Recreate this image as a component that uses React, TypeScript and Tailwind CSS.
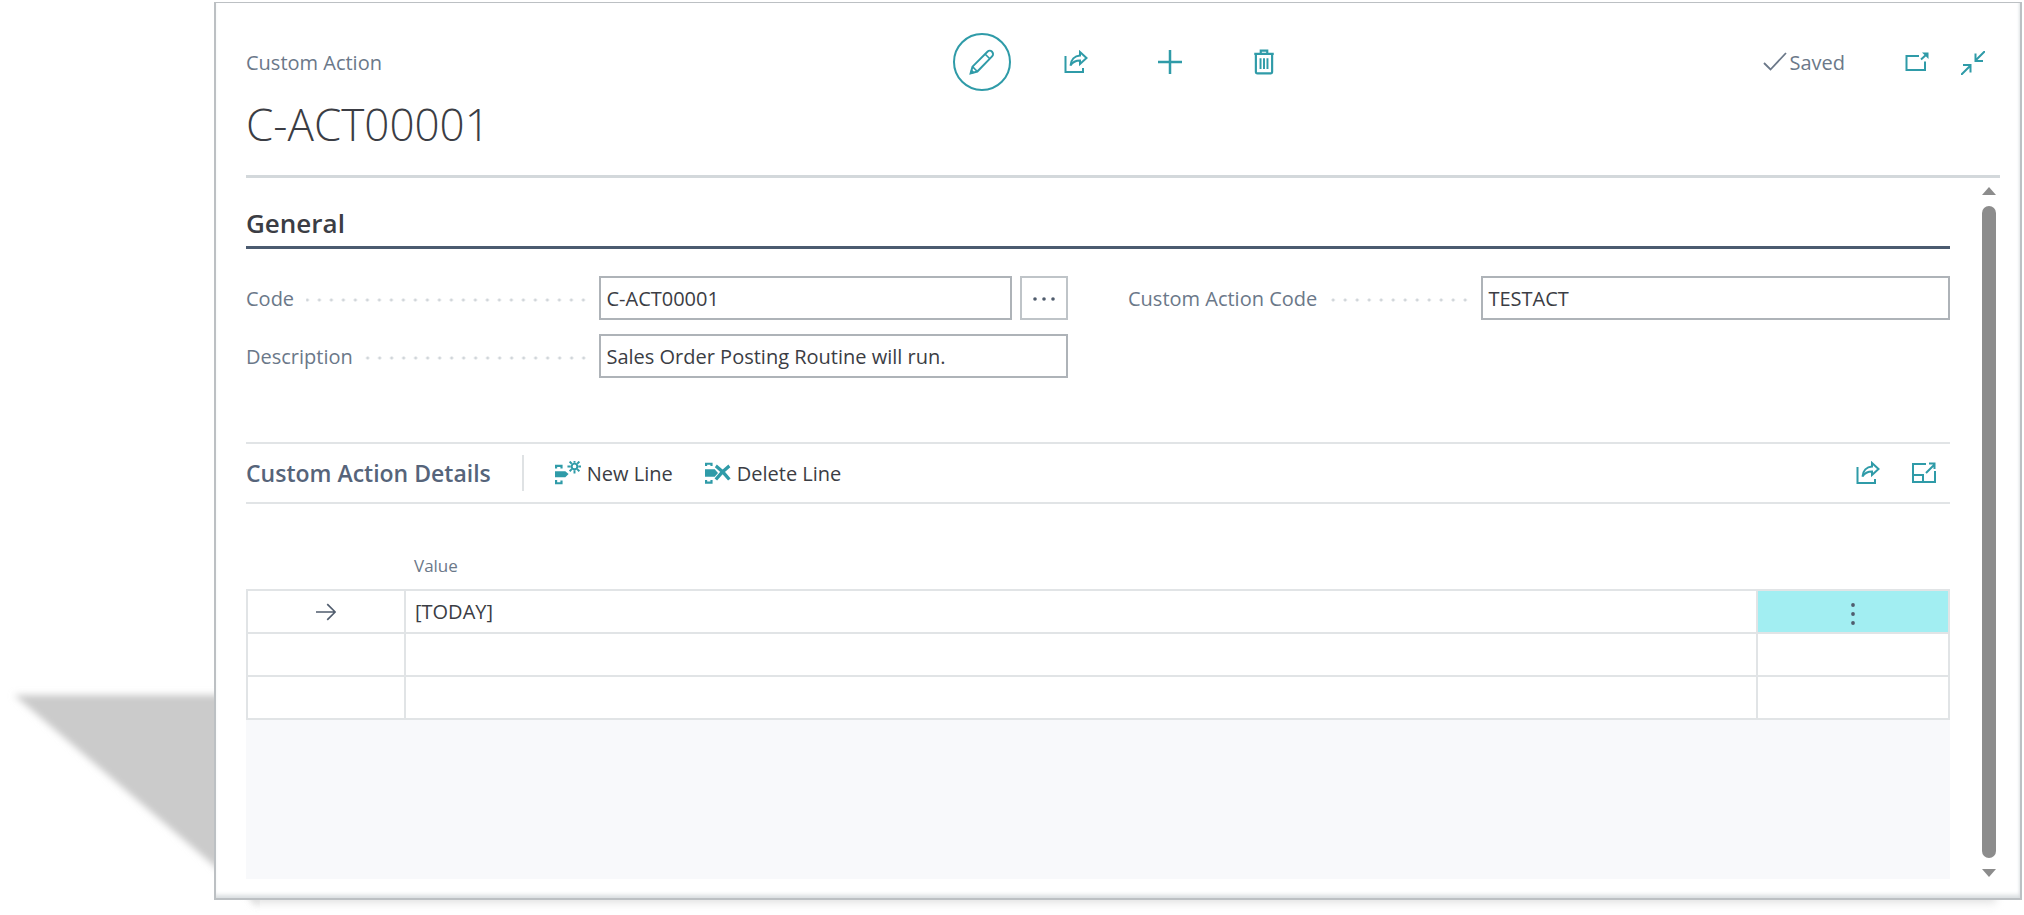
import { ReactNode } from 'react';

interface IconProps {
  className?: string;
  children: ReactNode;
}

function Icon({ className = 'size-6', children }: IconProps) {
  return (
    <svg className={`shrink-0 ${className}`} fill="none" viewBox="0 0 24 24" stroke="currentColor" strokeWidth={2} aria-hidden="true">
      {children}
    </svg>
  );
}

function ShareIcon() {
  return (
    <Icon>
      <path d="M1.500 6v16h17.500v-4" />
      <path d="M16 2l6.500 6L16 14v-3.500c-4 0-7 1-9.500 5C7 10 10.500 5.800 16 5.500z" />
    </Icon>
  );
}

interface FieldProps {
  id: string;
  label: string;
  value: string;
  lookup?: boolean;
}

function Field({ id, label, value, lookup }: FieldProps) {
  return (
    <div className="flex h-11 items-center">
      <div className="flex w-[43%] shrink-0 items-center gap-3 pt-[2px] pr-[10px]">
        <label htmlFor={id} className="whitespace-nowrap text-[#6b7889]">
          {label}
        </label>
        <span className="mt-px h-3 flex-1 bg-[radial-gradient(circle,#d0d5d9_1px,transparent_2px)] bg-[length:12px_12px] bg-right bg-repeat-x" />
      </div>
      <input
        id={id}
        defaultValue={value}
        className="h-11 min-w-0 flex-1 border-2 border-[#aeb3b8] bg-white px-[5px] pt-px text-[#3b3d44] outline-none"
      />
      {lookup && (
        <button type="button" aria-label="Look up" className="ml-2 flex h-11 w-12 items-center justify-center border-2 border-[#bfc4c8]">
          <svg className="size-6" viewBox="0 0 24 24" fill="#505c6d">
            <circle cx="3" cy="13" r="1.800" />
            <circle cx="12" cy="13" r="1.800" />
            <circle cx="21" cy="13" r="1.800" />
          </svg>
        </button>
      )}
    </div>
  );
}

function Header() {
  return (
    <header className="mr-5 border-b-[3px] border-[#d3d8db] pb-[18px]">
      <div className="grid h-[58px] grid-cols-[1fr_auto_1fr] items-center">
        <span className="pt-[2px] text-[#6b7889]">Custom Action</span>
        <div className="flex gap-9 text-[#2f9ba8]">
          <button type="button" aria-label="Edit" className="flex size-[58px] items-center justify-center rounded-full border-2">
            <Icon className="size-[26px]">
              <path d="M1.500 22.500l1.700-6.200L17 2.500a2.900 2.900 0 0 1 4.300 4.300L7.700 20.800z" strokeWidth={1.800} />
              <path d="M15 4.800l4.200 4.200M3.200 16.300l4.500 4.500" strokeWidth={1.500} />
              <path d="M1.500 22.500l.8-3 2.200 2.200z" fill="currentColor" strokeWidth={1} />
            </Icon>
          </button>
          <button type="button" aria-label="Share" className="flex size-[58px] items-center justify-center">
            <ShareIcon />
          </button>
          <button type="button" aria-label="New" className="flex size-[58px] items-center justify-center">
            <Icon>
              <path d="M12 0v24M0 12h24" strokeWidth={2.500} />
            </Icon>
          </button>
          <button type="button" aria-label="Delete" className="flex size-[58px] items-center justify-center">
            <Icon className="size-[26px]">
              <path d="M3 4.500h18M4.500 4.500v16.500a1.500 1.500 0 0 0 1.500 1.500h12a1.500 1.500 0 0 0 1.500-1.500V4.500M9 4.500V1.500h6v3" />
              <path d="M8.800 8.500v10M12 8.500v10M15.200 8.500v10" strokeWidth={1.800} />
            </Icon>
          </button>
        </div>
        <div className="flex items-center justify-end pt-[2px] pr-[15px] text-[#2f9ba8]">
          <span className="mr-[60px] flex items-center gap-[2px] text-[#6b7889]">
            <Icon>
              <path d="M1 12l6.500 6.500L23 2" strokeWidth={1.800} />
            </Icon>
            Saved
          </span>
          <button type="button" aria-label="Open in new window" className="mr-8">
            <Icon>
              <path d="M14 5H1.500v14h18.500v-8.500" />
              <path d="M16 8.500L22 3" />
              <path d="M17 1.500h6.500V8z" fill="currentColor" stroke="none" />
            </Icon>
          </button>
          <button type="button" aria-label="Collapse page">
            <Icon>
              <path d="M24 0l-9.500 9.500M14.500 2.500v7.500H22M0 24l9.500-9.500M2 14h7.500v7.500" />
            </Icon>
          </button>
        </div>
      </div>
      <h1 className="h-[66px] text-[44px] leading-[66px] font-light text-[#3b3d44]">C-ACT00001</h1>
    </header>
  );
}

function LinesToolbar() {
  return (
    <div className="mt-16 flex h-[62px] items-center border-y-2 border-[#e1e4e6]">
      <h2 className="text-[23px] font-semibold text-[#56647a]">Custom Action Details</h2>
      <div className="mx-[31px] h-9 w-[2px] bg-[#dfe2e4]" />
      <button type="button" className="mr-8 flex items-center gap-[6px] pt-[2px] text-[#3b3d44]">
        <Icon className="size-[26px] text-[#2f9ba8]">
          <path d="M1 7V4.500h5V7M1 17.500v3h5V18" />
          <path d="M0 9.500h9.500l3 2.500-3 3H0z" fill="currentColor" stroke="none" />
          <circle cx="18" cy="5" r="2.600" strokeWidth={1.800} />
          <path d="M18-1.500v3M18 8.500v3M11.500 5h3M21.500 5h3M13.500.5l2 2M22.500.5l-2 2M13.500 9.500l2-2M22.500 9.500l-2-2" strokeWidth={1.800} />
        </Icon>
        New Line
      </button>
      <button type="button" className="flex items-center gap-[6px] pt-[2px] text-[#3b3d44]">
        <Icon className="size-[26px] text-[#2f9ba8]">
          <path d="M1 4.500V2.500h5v2M1 17.500v2.500h5v-2.500" />
          <path d="M0 7.500h9l3 3.500-3 3.500H0z" fill="currentColor" stroke="none" />
          <path d="M10 4.500c4 3 9 8 12.500 12.500M22.500 4.500c-4 3-9 8-12.500 12.500" strokeWidth={3} />
        </Icon>
        Delete Line
      </button>
      <div className="ml-auto flex items-center gap-8 pr-[14px] text-[#2f9ba8]">
        <button type="button" aria-label="Share lines">
          <ShareIcon />
        </button>
        <button type="button" aria-label="Expand lines">
          <Icon>
            <path d="M14 3H1v18h22V10M1 14h10v7" />
            <path d="M14 12l8-8M17 2.500h5.500V8" />
          </Icon>
        </button>
      </div>
    </div>
  );
}

const rows = ['[TODAY]', '', ''];

function LinesTable() {
  return (
    <table className="w-full table-fixed border-collapse text-left text-[#3b3d44]">
      <thead>
        <tr className="h-[86px]">
          <th className="w-[158px]" aria-label="Selected" />
          <th className="px-[9px] pb-[9px] align-bottom text-[17px] leading-7 font-normal text-[#6b7889]">Value</th>
          <th className="w-48" aria-label="Options" />
        </tr>
      </thead>
      <tbody>
        {rows.map((value, i) => (
          <tr key={i} className="h-[43px]">
            <td className="border-2 border-[#e1e4e6]">
              {i === 0 && (
                <Icon className="mx-auto size-5 text-[#505c6d]">
                  <path d="M0 12h23M13.500 2.500L23 12l-9.500 9.500" />
                </Icon>
              )}
            </td>
            <td className="border-2 border-[#e1e4e6] px-[9px]">{value}</td>
            <td className={i === 0 ? 'border-2 border-[#e1e4e6] bg-[#a2eef2]' : 'border-2 border-[#e1e4e6]'}>
              {i === 0 && (
                <button type="button" aria-label="Show more options" className="flex w-full justify-center pt-1">
                  <svg className="size-6" viewBox="0 0 24 24" fill="#505c6d">
                    <circle cx="12" cy="3" r="1.900" />
                    <circle cx="12" cy="12" r="1.900" />
                    <circle cx="12" cy="21" r="1.900" />
                  </svg>
                </button>
              )}
            </td>
          </tr>
        ))}
      </tbody>
    </table>
  );
}

function Scrollbar() {
  return (
    <div className="mr-6 ml-8 flex w-[14px] shrink-0 flex-col items-center pt-[9px]" aria-hidden="true">
      <svg className="h-2 w-[14px]" viewBox="0 0 14 8" fill="#8c8c8c">
        <path d="M7 0l7 8H0z" />
      </svg>
      <div className="mt-[11px] mb-[11px] w-[14px] flex-1 rounded-full bg-[#8c8c8c]" />
      <svg className="mb-[2px] h-2 w-[14px]" viewBox="0 0 14 8" fill="#8c8c8c">
        <path d="M0 0h14L7 8z" />
      </svg>
    </div>
  );
}

export default function App() {
  return (
    <div className="relative flex min-h-screen bg-white pt-[2px] pr-[2px] pb-[15px] pl-[214px] font-['Open_Sans','Noto_Sans',sans-serif] text-xl">
      {/* perspective shadow falling to the left of the card */}
      <svg className="absolute bottom-0 left-0 h-[235px] w-[260px]" viewBox="0 0 260 235" aria-hidden="true">
        <defs>
          <filter id="soft" x="-10%" y="-10%" width="120%" height="120%">
            <feGaussianBlur stdDeviation="3.500" />
          </filter>
        </defs>
        <path d="M14 15H260V225z" fill="#cbcbcb" filter="url(#soft)" />
      </svg>
      <div className="absolute right-7 bottom-3 left-[252px] h-4 bg-[#e2e2e2] blur-[4px]" />
      <main className="relative flex min-w-0 flex-1 flex-col border-t border-r-2 border-b-2 border-l-2 border-[#bcc0c3] bg-white pt-[30px] pb-[19px] pl-[30px] shadow-[inset_0_-5px_4px_-2px_#d9dddf,inset_-3px_0_3px_-2px_#e3e6e9]">
        <Header />
        <div className="flex flex-1">
          <div className="flex min-w-0 flex-1 flex-col">
            <h2 className="border-b-[3px] border-[#4b5b70] pt-[22px] text-[26px] leading-[46px] font-semibold text-[#3b3d44]">General</h2>
            <div className="grid grid-cols-2 gap-x-[60px] gap-y-[14px] pt-[27px]">
              <Field id="code" label="Code" value="C-ACT00001" lookup />
              <Field id="action-code" label="Custom Action Code" value="TESTACT" />
              <Field id="description" label="Description" value="Sales Order Posting Routine will run." />
            </div>
            <LinesToolbar />
            <LinesTable />
            <div className="flex-1 bg-[#f8f9fb]" />
          </div>
          <Scrollbar />
        </div>
      </main>
    </div>
  );
}
